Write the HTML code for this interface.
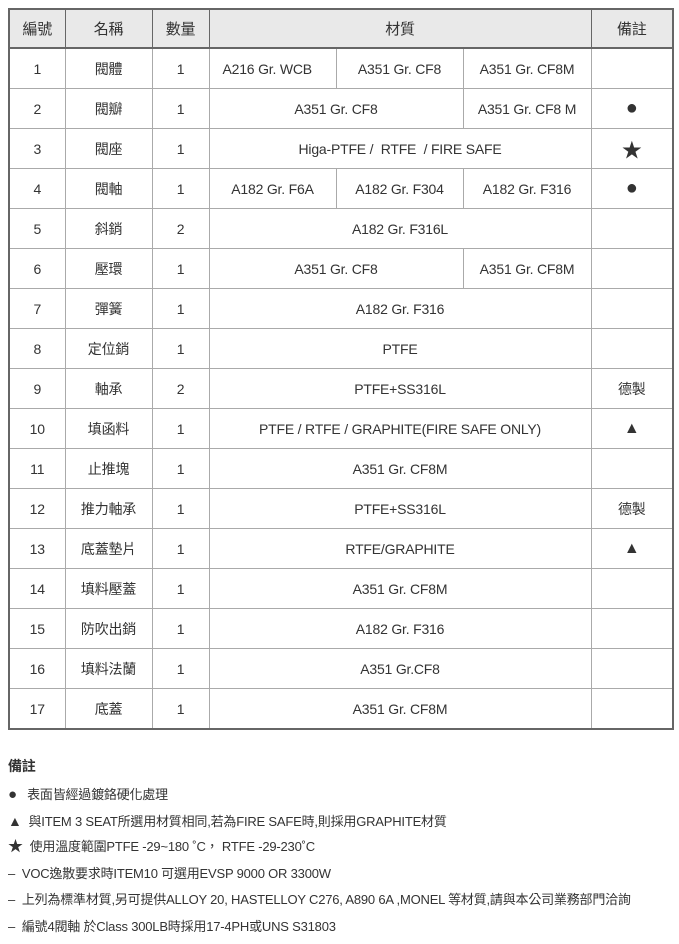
<!DOCTYPE html>
<html><head><meta charset="utf-8"><style>
body{margin:0;background:#fff;font-family:"Liberation Sans","Noto Sans CJK TC",sans-serif;color:#333;}
table{position:absolute;left:8px;top:8px;border-collapse:collapse;table-layout:fixed;width:664px;border:2px solid #666;}
td,th{border:1px solid #aaa;height:39px;padding:0;text-align:center;font-size:14px;font-weight:normal;letter-spacing:-0.2px;}
th{background:#e9e9e9;height:37px;font-size:15px;border-color:#666;}
tr:first-child th{border-bottom:2px solid #666;}
.l{text-align:left;padding-left:13px;}
.b{font-size:20px;}
.n{position:absolute;left:8px;font-size:13px;line-height:16px;letter-spacing:-0.2px;}
</style></head><body>
<table>
<colgroup><col style="width:56px"><col style="width:87px"><col style="width:57px"><col style="width:127px"><col style="width:127px"><col style="width:128px"><col style="width:82px"></colgroup>
<tr><th>編號</th><th>名稱</th><th>數量</th><th colspan="3">材質</th><th>備註</th></tr>
<tr><td>1</td><td>閥體</td><td>1</td><td class="l">A216 Gr. WCB</td><td>A351 Gr. CF8</td><td>A351 Gr. CF8M</td><td></td></tr>
<tr><td>2</td><td>閥瓣</td><td>1</td><td colspan="2">A351 Gr. CF8</td><td>A351 Gr. CF8 M</td><td class="b">●</td></tr>
<tr><td>3</td><td>閥座</td><td>1</td><td colspan="3">Higa-PTFE /&nbsp; RTFE&nbsp; / FIRE SAFE</td><td style="font-size:20px">★</td></tr>
<tr><td>4</td><td>閥軸</td><td>1</td><td>A182 Gr. F6A</td><td>A182 Gr. F304</td><td>A182 Gr. F316</td><td class="b">●</td></tr>
<tr><td>5</td><td>斜銷</td><td>2</td><td colspan="3">A182 Gr. F316L</td><td></td></tr>
<tr><td>6</td><td>壓環</td><td>1</td><td colspan="2">A351 Gr. CF8</td><td>A351 Gr. CF8M</td><td></td></tr>
<tr><td>7</td><td>彈簧</td><td>1</td><td colspan="3">A182 Gr. F316</td><td></td></tr>
<tr><td>8</td><td>定位銷</td><td>1</td><td colspan="3">PTFE</td><td></td></tr>
<tr><td>9</td><td>軸承</td><td>2</td><td colspan="3">PTFE+SS316L</td><td>德製</td></tr>
<tr><td>10</td><td>填函料</td><td>1</td><td colspan="3">PTFE / RTFE / GRAPHITE(FIRE SAFE ONLY)</td><td style="font-size:16px">▲</td></tr>
<tr><td>11</td><td>止推塊</td><td>1</td><td colspan="3">A351 Gr. CF8M</td><td></td></tr>
<tr><td>12</td><td>推力軸承</td><td>1</td><td colspan="3">PTFE+SS316L</td><td>德製</td></tr>
<tr><td>13</td><td>底蓋墊片</td><td>1</td><td colspan="3">RTFE/GRAPHITE</td><td style="font-size:16px">▲</td></tr>
<tr><td>14</td><td>填料壓蓋</td><td>1</td><td colspan="3">A351 Gr. CF8M</td><td></td></tr>
<tr><td>15</td><td>防吹出銷</td><td>1</td><td colspan="3">A182 Gr. F316</td><td></td></tr>
<tr><td>16</td><td>填料法蘭</td><td>1</td><td colspan="3">A351 Gr.CF8</td><td></td></tr>
<tr><td>17</td><td>底蓋</td><td>1</td><td colspan="3">A351 Gr. CF8M</td><td></td></tr>
</table>
<div class="n" style="top:758px;font-size:14px;font-weight:bold">備註</div>
<div class="n" style="top:787px"><span style="font-size:15px">●</span>&nbsp;&nbsp; 表面皆經過鍍鉻硬化處理</div>
<div class="n" style="top:813px"><span style="font-size:14px">▲</span>&nbsp; 與ITEM 3 SEAT所選用材質相同,若為FIRE SAFE時,則採用GRAPHITE材質</div>
<div class="n" style="top:839px"><span style="font-size:15px">★</span>&nbsp; 使用溫度範圍PTFE -29~180 ˚C， RTFE -29-230˚C</div>
<div class="n" style="top:866px">–&nbsp; VOC逸散要求時ITEM10 可選用EVSP 9000 OR 3300W</div>
<div class="n" style="top:892px">–&nbsp; 上列為標準材質,另可提供ALLOY 20, HASTELLOY C276, A890 6A ,MONEL 等材質,請與本公司業務部門洽詢</div>
<div class="n" style="top:919px">–&nbsp; 編號4閥軸 於Class 300LB時採用17-4PH或UNS S31803</div>
</body></html>
